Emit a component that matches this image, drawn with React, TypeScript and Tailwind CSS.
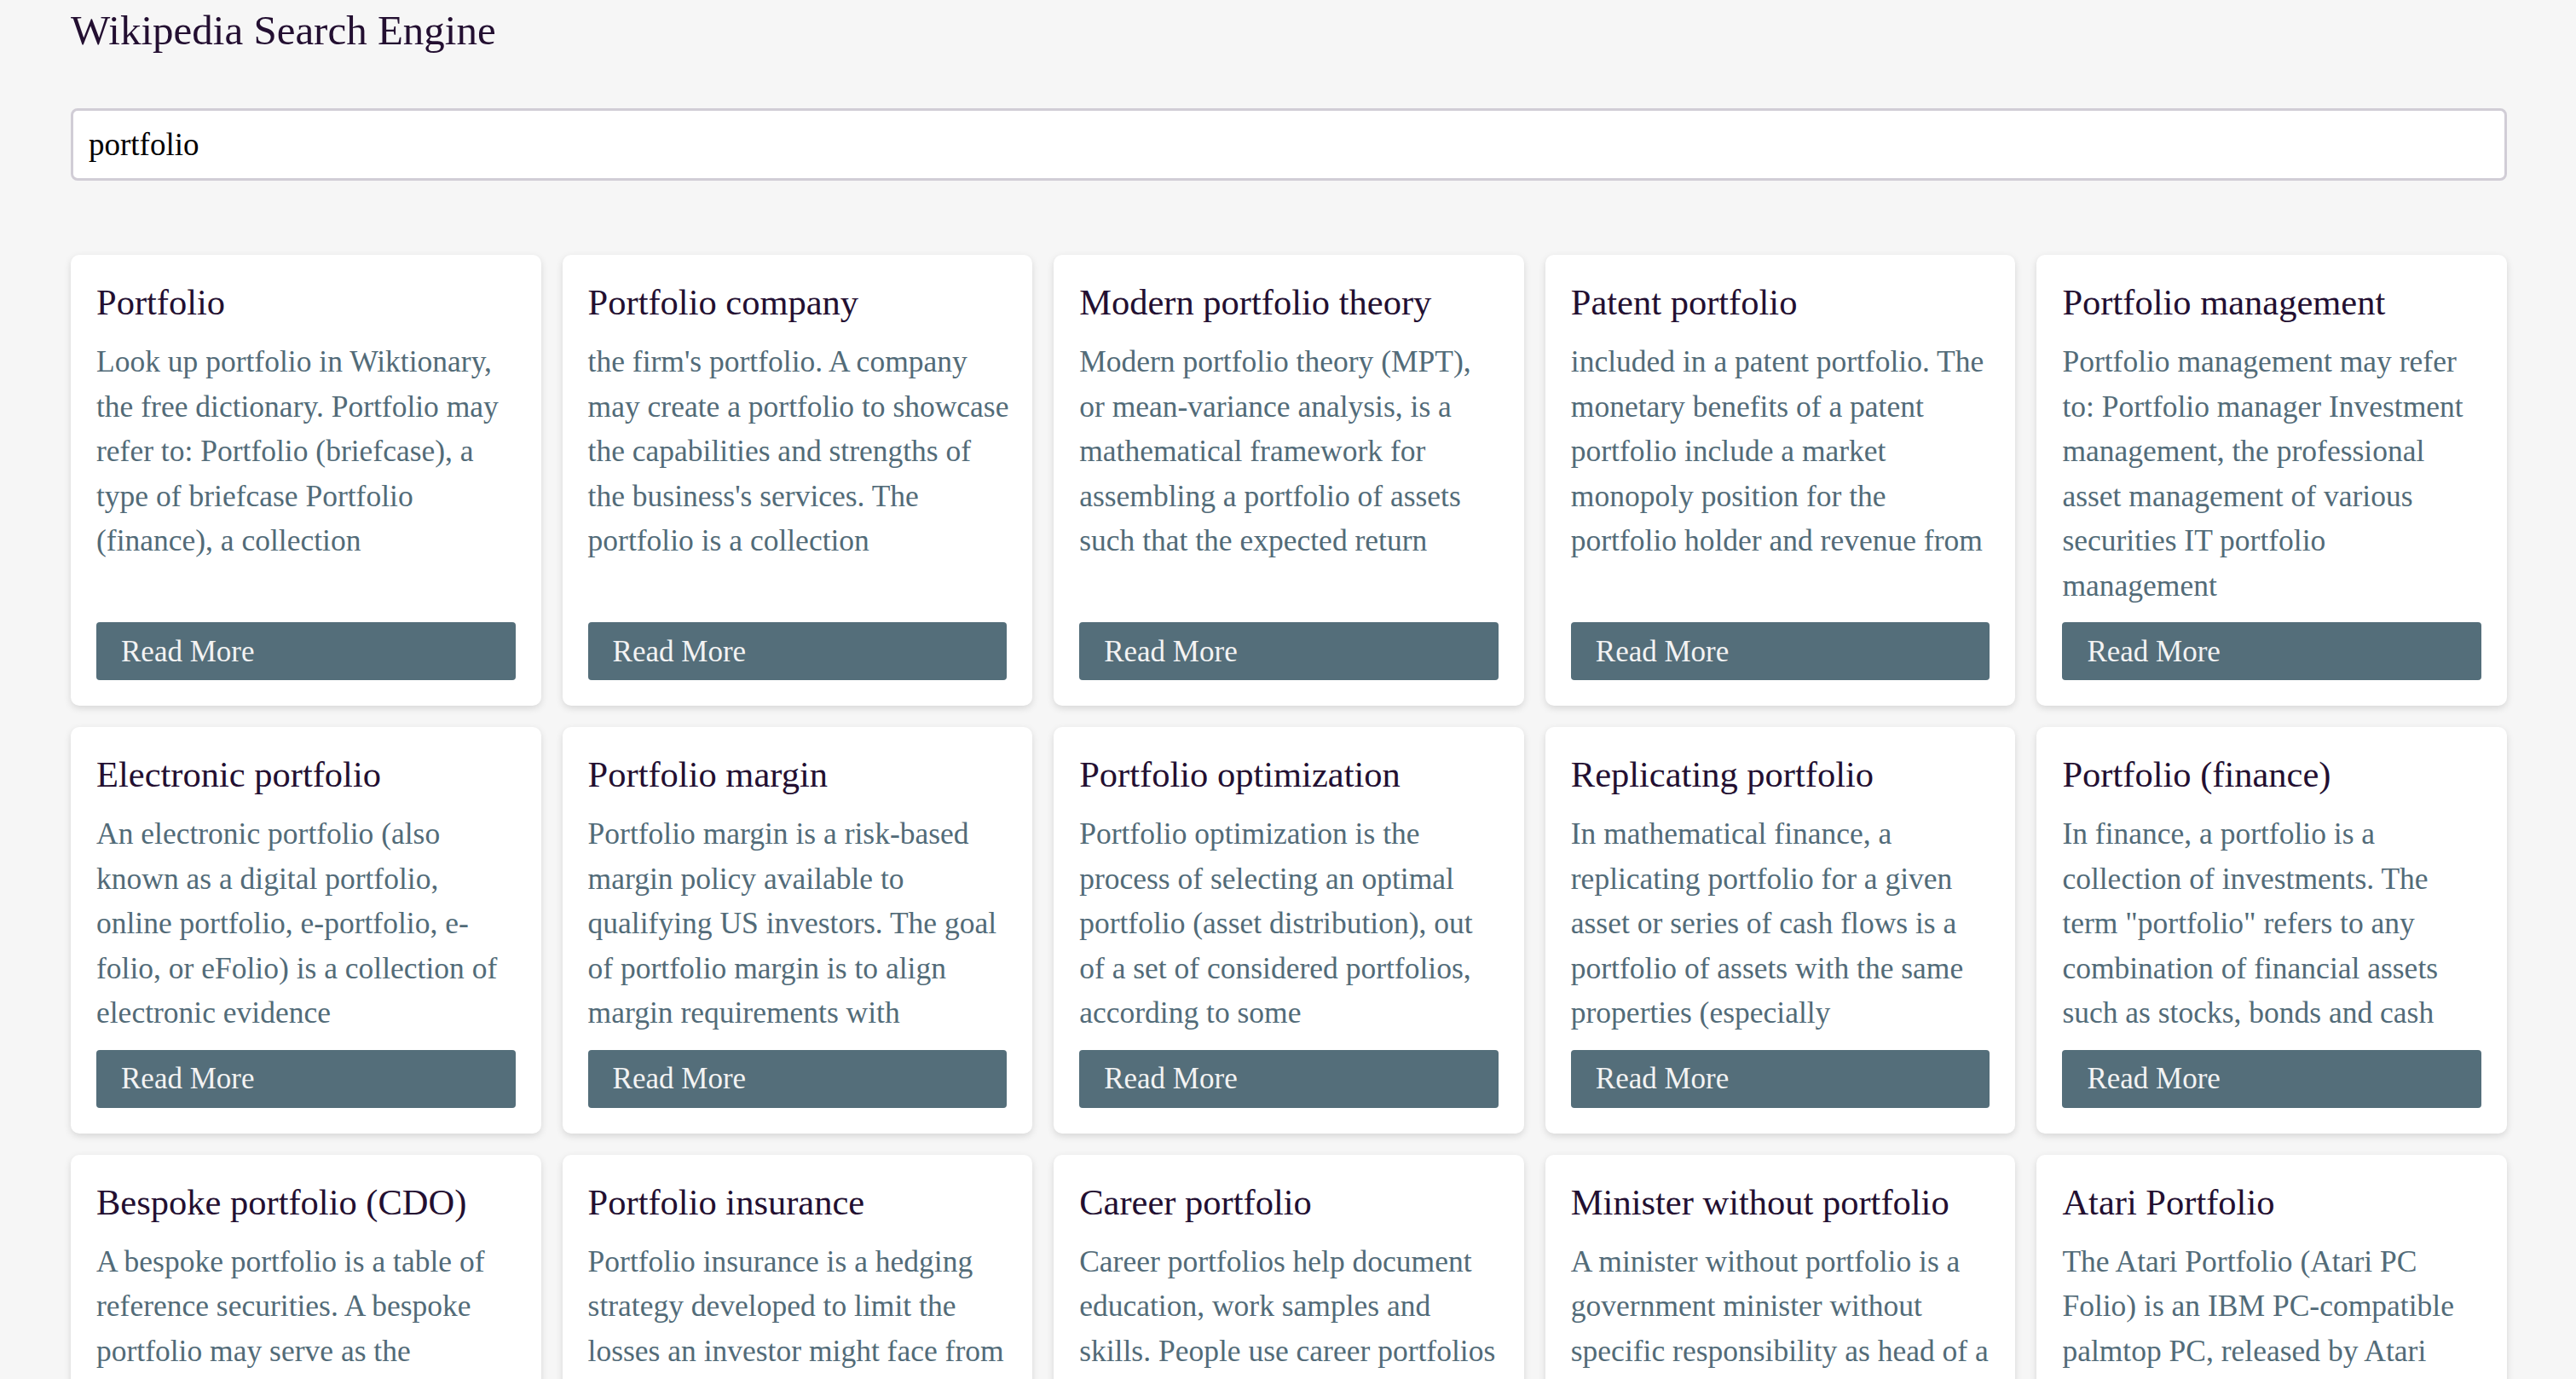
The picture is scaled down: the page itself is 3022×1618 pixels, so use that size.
import React from "react";

type Item = { title: string; lines: string[] };

const items: Item[] = [
  {
    title: "Portfolio",
    lines: [
      "Look up portfolio in Wiktionary,",
      "the free dictionary. Portfolio may",
      "refer to: Portfolio (briefcase), a",
      "type of briefcase Portfolio",
      "(finance), a collection",
    ],
  },
  {
    title: "Portfolio company",
    lines: [
      "the firm's portfolio. A company",
      "may create a portfolio to showcase",
      "the capabilities and strengths of",
      "the business's services. The",
      "portfolio is a collection",
    ],
  },
  {
    title: "Modern portfolio theory",
    lines: [
      "Modern portfolio theory (MPT),",
      "or mean-variance analysis, is a",
      "mathematical framework for",
      "assembling a portfolio of assets",
      "such that the expected return",
    ],
  },
  {
    title: "Patent portfolio",
    lines: [
      "included in a patent portfolio. The",
      "monetary benefits of a patent",
      "portfolio include a market",
      "monopoly position for the",
      "portfolio holder and revenue from",
    ],
  },
  {
    title: "Portfolio management",
    lines: [
      "Portfolio management may refer",
      "to: Portfolio manager Investment",
      "management, the professional",
      "asset management of various",
      "securities IT portfolio",
      "management",
    ],
  },
  {
    title: "Electronic portfolio",
    lines: [
      "An electronic portfolio (also",
      "known as a digital portfolio,",
      "online portfolio, e-portfolio, e-",
      "folio, or eFolio) is a collection of",
      "electronic evidence",
    ],
  },
  {
    title: "Portfolio margin",
    lines: [
      "Portfolio margin is a risk-based",
      "margin policy available to",
      "qualifying US investors. The goal",
      "of portfolio margin is to align",
      "margin requirements with",
    ],
  },
  {
    title: "Portfolio optimization",
    lines: [
      "Portfolio optimization is the",
      "process of selecting an optimal",
      "portfolio (asset distribution), out",
      "of a set of considered portfolios,",
      "according to some",
    ],
  },
  {
    title: "Replicating portfolio",
    lines: [
      "In mathematical finance, a",
      "replicating portfolio for a given",
      "asset or series of cash flows is a",
      "portfolio of assets with the same",
      "properties (especially",
    ],
  },
  {
    title: "Portfolio (finance)",
    lines: [
      "In finance, a portfolio is a",
      "collection of investments. The",
      "term \"portfolio\" refers to any",
      "combination of financial assets",
      "such as stocks, bonds and cash",
    ],
  },
  {
    title: "Bespoke portfolio (CDO)",
    lines: [
      "A bespoke portfolio is a table of",
      "reference securities. A bespoke",
      "portfolio may serve as the",
      "reference entities in a credit",
      "derivative",
    ],
  },
  {
    title: "Portfolio insurance",
    lines: [
      "Portfolio insurance is a hedging",
      "strategy developed to limit the",
      "losses an investor might face from",
      "falling stock prices without",
      "having to sell the stocks",
    ],
  },
  {
    title: "Career portfolio",
    lines: [
      "Career portfolios help document",
      "education, work samples and",
      "skills. People use career portfolios",
      "for a variety of purposes",
      "including job applications",
    ],
  },
  {
    title: "Minister without portfolio",
    lines: [
      "A minister without portfolio is a",
      "government minister without",
      "specific responsibility as head of a",
      "particular government",
      "department",
    ],
  },
  {
    title: "Atari Portfolio",
    lines: [
      "The Atari Portfolio (Atari PC",
      "Folio) is an IBM PC-compatible",
      "palmtop PC, released by Atari",
      "Corporation in June 1989",
      "and widely regarded",
    ],
  },
];

function Card({ item }: { item: Item }) {
  return (
    <div className="flex flex-col rounded-[10px] bg-white p-[30px] shadow-[0_3px_8px_rgba(0,0,0,0.13)]">
      <h2 className="mb-[18px] mt-[1px] whitespace-nowrap text-[42.5px] font-normal leading-[50px] text-[#230f31]">
        {item.title}
      </h2>
      <div className="text-[35.5px] leading-[52.5px] text-[#526b78]">
        {item.lines.map((l, i) => (
          <div key={i} className="whitespace-nowrap">
            {l}
          </div>
        ))}
      </div>
      <div className="mt-auto pt-[17px]">
        <button className="flex h-[68px] w-full items-center rounded-[4px] bg-[#546e7a] px-[29px] text-left text-[35px] leading-none text-[#f3f3f3]">
          Read More
        </button>
      </div>
    </div>
  );
}

export default function App() {
  return (
    <div
      className="min-h-screen overflow-hidden bg-[#f6f6f6] pl-[83px] pr-[81px]"
      style={{ fontFamily: '"Liberation Serif", "Times New Roman", serif' }}
    >
      <h1 className="pt-[6px] text-[49px] font-normal leading-[60px] text-[#230f31]">
        Wikipedia Search Engine
      </h1>
      <div className="mt-[61px] flex h-[85px] items-center rounded-[8px] border-[3px] border-[#d1cdd6] bg-white px-[18px]">
        <input
          className="w-full bg-transparent text-[37px] text-black outline-none"
          defaultValue="portfolio"
          style={{ fontFamily: '"Liberation Serif", "Times New Roman", serif' }}
        />
      </div>
      <div className="mt-[87px] grid grid-cols-5 gap-[25px] pb-[40px]">
        {items.map((it, i) => (
          <Card key={i} item={it} />
        ))}
      </div>
    </div>
  );
}
